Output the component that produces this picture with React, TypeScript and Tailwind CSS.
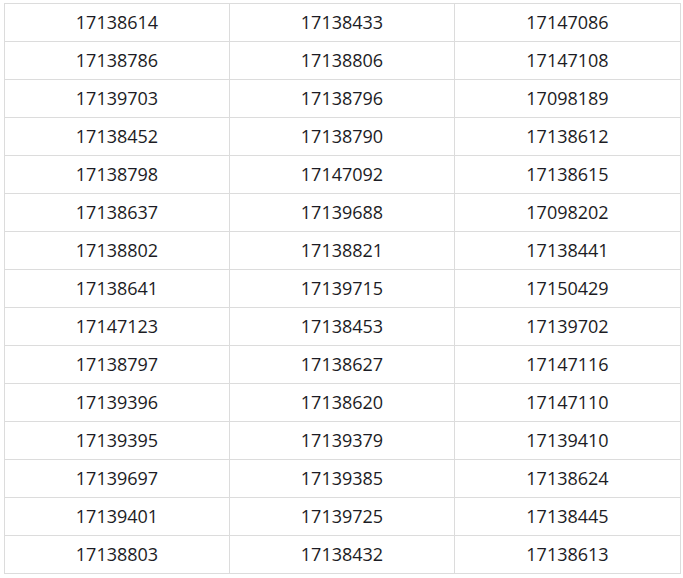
const rows = [
  ["17138614", "17138433", "17147086"],
  ["17138786", "17138806", "17147108"],
  ["17139703", "17138796", "17098189"],
  ["17138452", "17138790", "17138612"],
  ["17138798", "17147092", "17138615"],
  ["17138637", "17139688", "17098202"],
  ["17138802", "17138821", "17138441"],
  ["17138641", "17139715", "17150429"],
  ["17147123", "17138453", "17139702"],
  ["17138797", "17138627", "17147116"],
  ["17139396", "17138620", "17147110"],
  ["17139395", "17139379", "17139410"],
  ["17139697", "17139385", "17138624"],
  ["17139401", "17139725", "17138445"],
  ["17138803", "17138432", "17138613"],
]

export default function App() {
  return (
    <div className="w-[683px] h-[578px] bg-white pl-[4px] pt-[3px] overflow-hidden">
      <table className="w-[677px] border-collapse table-fixed font-['Open_Sans',sans-serif] text-[18px] text-[#1c1c24]">
        <colgroup>
          <col className="w-[225px]" />
          <col className="w-[225px]" />
          <col className="w-[226px]" />
        </colgroup>
        <tbody>
          {rows.map((row, i) => (
            <tr key={i} className="h-[38px]">
              {row.map((cell, j) => (
                <td key={j} className="border border-[#dcdcdc] text-center p-0 leading-[37px]">
                  {cell}
                </td>
              ))}
            </tr>
          ))}
        </tbody>
      </table>
    </div>
  )
}
